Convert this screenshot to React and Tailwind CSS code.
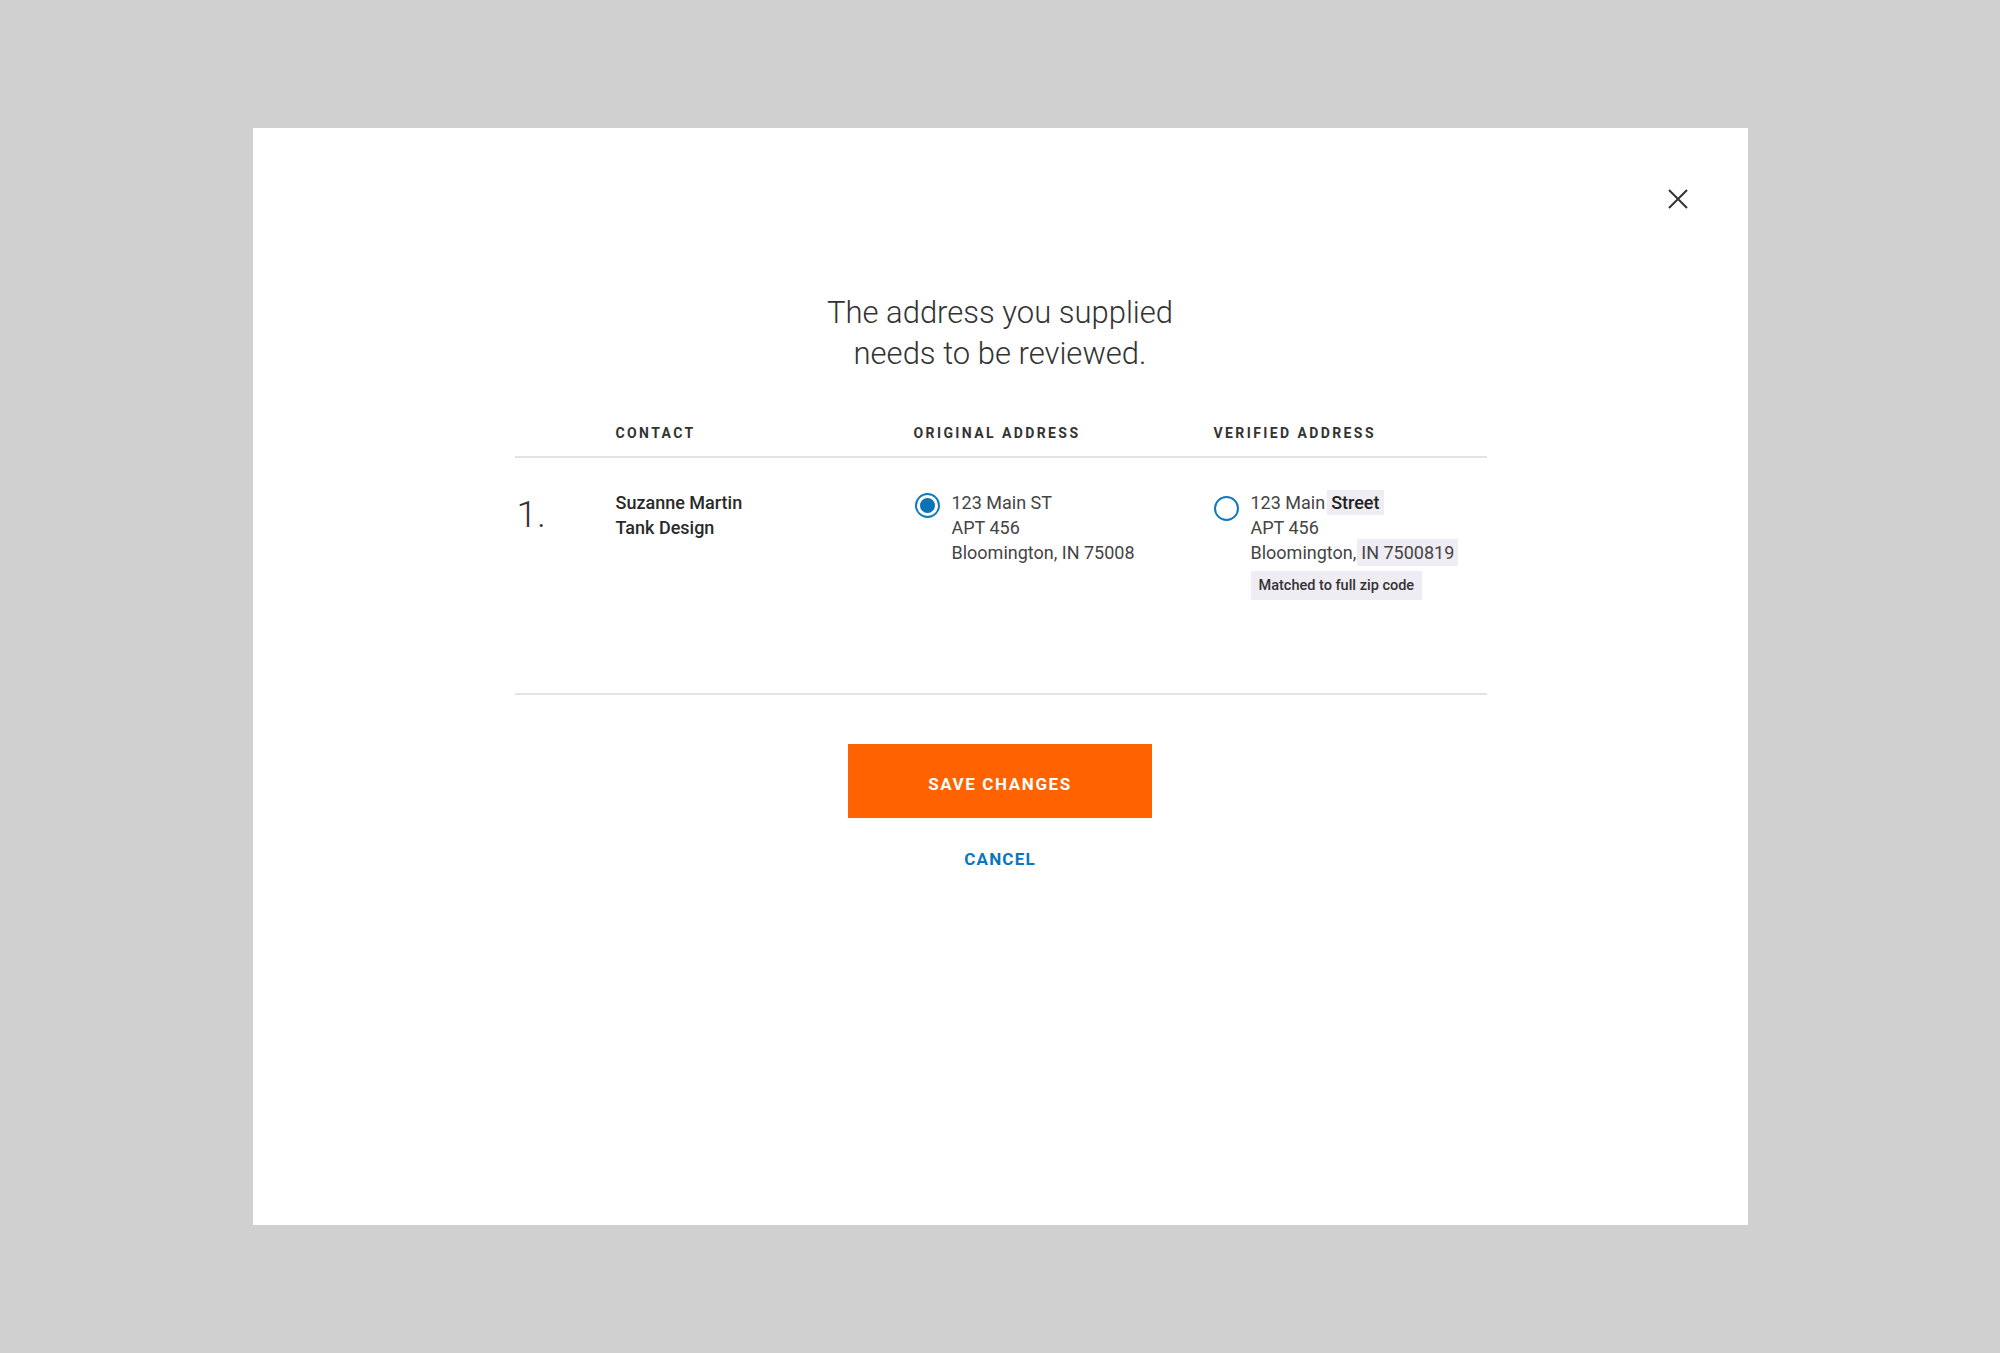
import { useState } from 'react';

const font = { fontFamily: 'Roboto, "Liberation Sans", sans-serif' };

function Radio({ checked, onClick }) {
  return (
    <button
      type="button"
      onClick={onClick}
      className="w-[25px] h-[25px] shrink-0 rounded-full border-2 border-[#1279bd] bg-white flex items-center justify-center"
    >
      {checked && <span className="w-[15px] h-[15px] rounded-full bg-[#0d72b5]" />}
    </button>
  );
}

export default function App() {
  const [choice, setChoice] = useState('original');

  return (
    <div className="w-full h-screen bg-[#d0d0d0] flex items-center justify-center" style={font}>
      <div className="relative w-[1495px] h-[1097px] bg-white flex flex-col items-center">
        <button type="button" className="absolute top-[61px] right-[60px] w-[20px] h-[20px] text-[#333]">
          <svg viewBox="0 0 20 20" width="20" height="20" fill="none" stroke="currentColor" strokeWidth="2">
            <path d="M1 1L19 19M19 1L1 19" />
          </svg>
        </button>

        <h1 className="mt-[164px] text-[31px] leading-[41px] font-light text-[#333] text-center">
          The address you supplied
          <br />
          needs to be reviewed.
        </h1>

        <div className="w-[972px] mt-[51px] ml-[1px]">
          <div className="flex pb-[15px] border-b-2 border-[#e3e3e3] text-[14px] leading-[16px] font-bold tracking-[2.4px] text-[#333]">
            <div className="w-[101px]" />
            <div className="w-[298px]">CONTACT</div>
            <div className="w-[300px]">ORIGINAL ADDRESS</div>
            <div className="flex-1">VERIFIED ADDRESS</div>
          </div>

          <div className="flex h-[237px] pt-[32px] border-b-2 border-[#e3e3e3]">
            <div className="w-[101px] pl-[2px] text-[37px] leading-[26px] mt-[12px] font-light text-[#333]">1.</div>
            <div className="w-[298px] text-[18px] leading-[25px] font-medium text-[#2a2a2a]">
              <div>Suzanne Martin</div>
              <div>Tank Design</div>
            </div>
            <div className="w-[300px] flex gap-[12px]">
              <div className="pt-[3px] pl-[1px]">
                <Radio checked={choice === 'original'} onClick={() => setChoice('original')} />
              </div>
              <div className="text-[18px] leading-[25px] text-[#444]">
                <div>123 Main ST</div>
                <div>APT 456</div>
                <div>Bloomington, IN 75008</div>
              </div>
            </div>
            <div className="flex-1 flex gap-[12px]">
              <div className="pt-[6px]">
                <Radio checked={choice === 'verified'} onClick={() => setChoice('verified')} />
              </div>
              <div className="text-[18px] leading-[25px] text-[#444]">
                <div>
                  123 Main
                  <span className="bg-[#efecf3] ml-[2px] px-[4px] py-[2px] font-medium text-[#222]">Street</span>
                </div>
                <div>APT 456</div>
                <div>
                  Bloomington,
                  <span className="bg-[#efecf3] px-[4px] py-[3px] ml-[1px]">IN 7500819</span>
                </div>
                <div className="mt-[6px] inline-block bg-[#efecf3] px-[8px] text-[14.5px] leading-[29px] font-medium text-[#333]">
                  Matched to full zip code
                </div>
              </div>
            </div>
          </div>
        </div>

        <button
          type="button"
          className="mt-[49px] w-[304px] h-[74px] pt-[7px] bg-[#ff6200] text-white text-[17px] font-bold tracking-[1.6px]"
        >
          SAVE CHANGES
        </button>
        <button type="button" className="mt-[31px] text-[17px] leading-[20px] font-bold tracking-[1.2px] text-[#0a76bb]">
          CANCEL
        </button>
      </div>
    </div>
  );
}
